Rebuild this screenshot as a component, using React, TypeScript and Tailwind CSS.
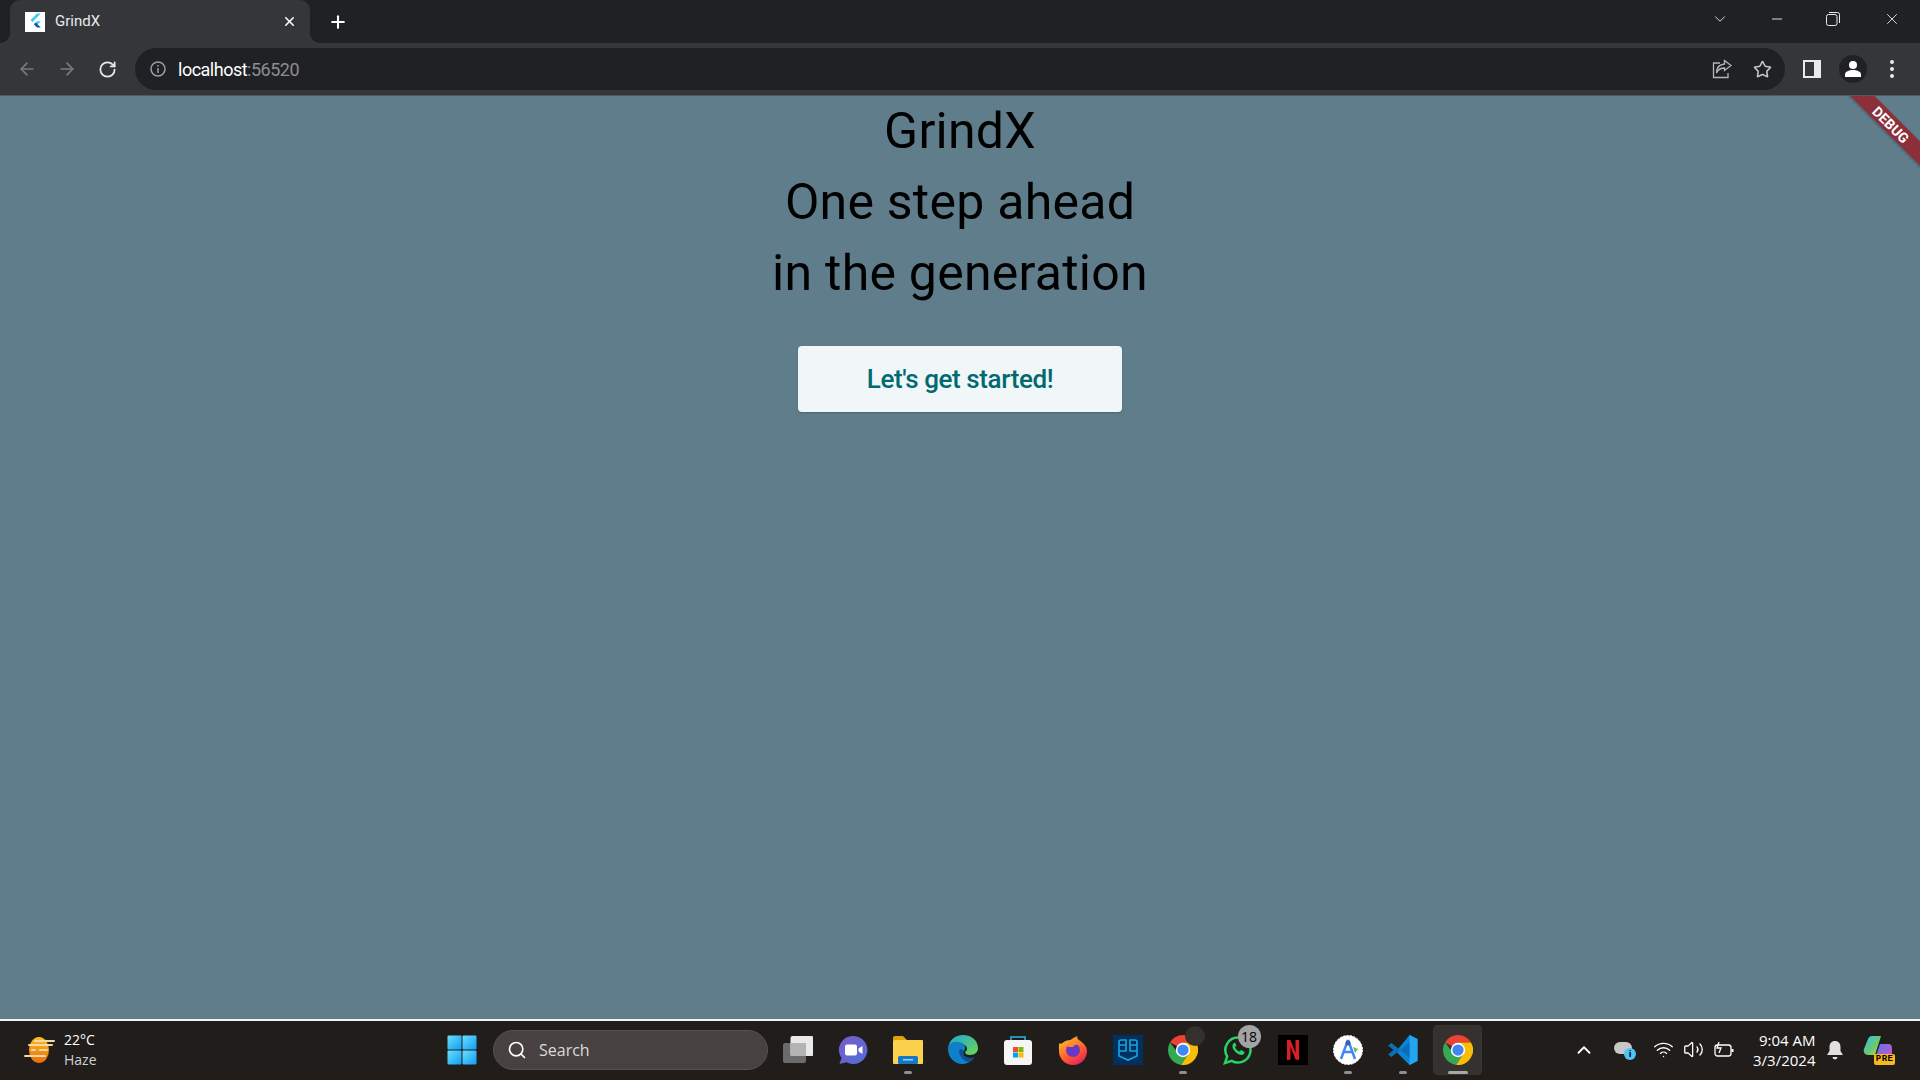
import { ArrowLeft, ArrowRight, ChevronDown, ChevronUp, Minus, Plus, RotateCw, Search, Star, Volume2, Wifi, X } from 'lucide-react';

const roboto = "font-['Roboto',sans-serif]";
const segoe = "font-['Open_Sans','Noto_Sans',sans-serif]";

function FlutterIcon() {
  return (
    <div className="flex h-5 w-5 shrink-0 items-center justify-center bg-white">
      <svg className="h-5 w-5" viewBox="0 0 20 20">
        <path d="M12 1.500h3.800L7.500 10 5.600 8z" fill="#44c7f5" />
        <path d="M12 9.200h3.800l-5 5-1.900-1.900z" fill="#44c7f5" />
        <path d="M8.900 12.300l1.900-1.900 5 5.100H12z" fill="#0b5fb0" />
      </svg>
    </div>
  );
}

function ChromeLogo({ size = 30 }: { size?: number }) {
  return (
    <svg width={size} height={size} viewBox="0 0 48 48">
      <path d="M3.200 12A24 24 0 0 1 24 0a24 24 0 0 1 20.800 12H24l-9 6z" fill="#ea4335" />
      <path d="M3.200 12A24 24 0 0 0 21 47.800L31 33l-13-2z" fill="#34a853" />
      <path d="M44.800 12H24l8 19-11 16.800A24 24 0 0 0 44.800 12z" fill="#fbbc04" />
      <circle cx="24" cy="24" r="11.500" fill="#fff" />
      <circle cx="24" cy="24" r="9" fill="#4285f4" />
    </svg>
  );
}

function WinLogo() {
  return (
    <svg width="30" height="30" viewBox="0 0 30 30">
      <defs>
        <linearGradient id="win" x1="0" y1="0" x2="1" y2="1">
          <stop offset="0" stopColor="#6ce0fb" />
          <stop offset="1" stopColor="#0f9bf5" />
        </linearGradient>
      </defs>
      <rect x="0.500" y="0.500" width="14" height="14" rx="1" fill="url(#win)" />
      <rect x="15.500" y="0.500" width="14" height="14" rx="1" fill="url(#win)" />
      <rect x="0.500" y="15.500" width="14" height="14" rx="1" fill="url(#win)" />
      <rect x="15.500" y="15.500" width="14" height="14" rx="1" fill="url(#win)" />
    </svg>
  );
}

function TaskView() {
  return (
    <svg width="30" height="30" viewBox="0 0 30 30">
      <rect x="0" y="8" width="23" height="20" rx="2" fill="#6b6b6b" />
      <rect x="7.500" y="1" width="23" height="20" rx="2" fill="#e9e9e9" />
      <rect x="7.500" y="8" width="15.500" height="13" fill="#b4b4b4" />
    </svg>
  );
}

function MeetIcon() {
  return (
    <svg width="30" height="30" viewBox="0 0 30 30">
      <defs>
        <linearGradient id="meet" x1="0" y1="0" x2="1" y2="1">
          <stop offset="0" stopColor="#7b5bc9" />
          <stop offset="1" stopColor="#4f6fd8" />
        </linearGradient>
      </defs>
      <path d="M15.500 1a14 14 0 1 1-7 26.200L1.500 29l2-6A14 14 0 0 1 15.500 1z" fill="url(#meet)" />
      <rect x="7" y="9.500" width="12" height="11" rx="2" fill="#fff" />
      <path d="M20.500 13.500l4-2.500v8l-4-2.500z" fill="#fff" />
    </svg>
  );
}

function FolderIcon() {
  return (
    <svg width="32" height="30" viewBox="0 0 32 30">
      <path d="M1 3a2 2 0 0 1 2-2h8l4 4h-14z" fill="#d9a406" />
      <rect x="1" y="5" width="30" height="24" rx="1" fill="#fbd24e" />
      <rect x="6" y="21" width="20" height="8" rx="1.500" fill="#1478c7" />
      <rect x="11" y="24" width="10" height="1.500" fill="#9bd0f5" />
    </svg>
  );
}

function EdgeIcon() {
  return (
    <svg width="32" height="32" viewBox="0 0 32 32">
      <defs>
        <linearGradient id="edgeTop" x1="0" y1="0" x2="1" y2="1">
          <stop offset="0" stopColor="#1ba6d8" />
          <stop offset="1" stopColor="#6fd84e" />
        </linearGradient>
      </defs>
      <path d="M1 15C2 6 8 1 16 1c9 0 15 6 15 13 0 4-3 7-8 7-3 0-5-1-5-3 4-2 2-8-4-8-7 0-13 1-13 5z" fill="url(#edgeTop)" />
      <path d="M1 15c0-6 6-8 10-7 6 0 9 5 6 9-2 3 0 7 6 7 2 0 3 0 4-1-3 5-7 7-12 7C7 30 1 23 1 15z" fill="#0f7fc7" />
      <path d="M12 16c0 6 4 10 9 12 3 0 5-1 6-5-1 1-2 1-4 1-6 0-8-4-6-7-2-2-4-2-5-1z" fill="#0d4f94" />
    </svg>
  );
}

function StoreIcon() {
  return (
    <svg width="30" height="30" viewBox="0 0 30 30">
      <path d="M8 5V2h14v3" fill="none" stroke="#29b6e8" strokeWidth="1.500" />
      <rect x="1" y="5" width="28" height="25" rx="3" fill="#f5f5f5" />
      <rect x="10" y="12" width="5" height="5" fill="#f25022" />
      <rect x="15.500" y="12" width="5" height="5" fill="#7fba00" />
      <rect x="10" y="17.500" width="5" height="5" fill="#00a4ef" />
      <rect x="15.500" y="17.500" width="5" height="5" fill="#ffb900" />
    </svg>
  );
}

function FirefoxIcon() {
  return (
    <svg width="30" height="30" viewBox="0 0 30 30">
      <defs>
        <linearGradient id="fox" x1="0.200" y1="0" x2="0.800" y2="1">
          <stop offset="0" stopColor="#ffc02c" />
          <stop offset="0.600" stopColor="#ff5a2a" />
          <stop offset="1" stopColor="#e3196f" />
        </linearGradient>
      </defs>
      <path d="M1.500 8c1 1 2 1 3 0 2-2 5-3 8-3 2-2 5-3 7-4-1 2 0 3 3 5 4 3 6.500 6 6.500 10a14 14 0 0 1-28 0c0-3-.5-6 .5-8z" fill="url(#fox)" />
      <circle cx="15" cy="15" r="7" fill="#6a38c9" />
      <path d="M8 11c3-4 10-5 14-1-4-1-6 0-7 2-3 0-5 0-7-1z" fill="#ff8a1f" />
    </svg>
  );
}

function ShieldIcon() {
  return (
    <div className="flex h-[30px] w-[30px] items-center justify-center bg-[#00305f]">
      <svg width="22" height="24" viewBox="0 0 22 24" fill="none" stroke="#17a5d8" strokeWidth="1.600">
        <path d="M2 4a2 2 0 0 1 2-2h5v11H2zM13 2h5a2 2 0 0 1 2 2v9h-7zM2 13v5l9 4 9-4v-5M2 7h7M13 7h7" />
      </svg>
    </div>
  );
}

function WhatsappIcon() {
  return (
    <svg width="30" height="30" viewBox="0 0 30 30" fill="none">
      <path d="M15 2.500a12.500 12.500 0 1 1-6.300 23.300L2 28l2.200-6.500A12.500 12.500 0 0 1 15 2.500z" stroke="#25d366" strokeWidth="2.500" />
      <path d="M10.500 8.500c-2 2-1 5.500 2 8.500s6.500 4 8.500 2l.5-2-3.500-2-1.500 1.500c-2-.5-3.500-2-4.500-4.500l1.500-1.500-1.500-3z" fill="#25d366" />
    </svg>
  );
}

function NetflixIcon() {
  return (
    <div className="flex h-[30px] w-[30px] items-center justify-center bg-black">
      <svg width="12" height="20" viewBox="0 0 12 20">
        <path d="M0 0h3.500l5 13V0H12v20l-3.500-.5-5-13V19.500L0 20z" fill="#d81f26" />
      </svg>
    </div>
  );
}

function StudioIcon() {
  return (
    <svg width="30" height="30" viewBox="0 0 30 30">
      <circle cx="15" cy="15" r="14.500" fill="#fff" stroke="#fff" strokeDasharray="2 1.500" />
      <path d="M15 5 8 24M15 5l7 19M10.500 17h9" fill="none" stroke="#4285f4" strokeWidth="2.500" />
      <circle cx="15" cy="8" r="2.500" fill="#3a5fa8" />
      <path d="M20 12l5 2-3 4z" fill="#5bb974" />
    </svg>
  );
}

function VsCodeIcon() {
  return (
    <svg width="30" height="30" viewBox="0 0 30 30">
      <path d="M21.500 0 29.500 4v22l-8 4L8 16.500 21.500 0z" fill="#0a84d6" />
      <path d="M21.500 0 29.500 4v22l-8 4z" fill="#25a5ee" />
      <path d="M21.500 7.500v15L3.500 8 0 10.500 5.500 15 0 19.500 3.500 22z" fill="#0a6fb8" />
    </svg>
  );
}

function WeatherIcon() {
  return (
    <svg width="32" height="28" viewBox="0 0 32 28">
      <defs>
        <linearGradient id="sun" x1="0" y1="0" x2="0" y2="1">
          <stop offset="0" stopColor="#fbbf24" />
          <stop offset="1" stopColor="#ea6a0c" />
        </linearGradient>
      </defs>
      <ellipse cx="15" cy="14" rx="10" ry="13" fill="url(#sun)" />
      <g stroke="#f1d9a6" strokeWidth="2" strokeLinecap="round">
        <path d="M11 5h19M5 9h23M16 14h7M1 20h20M8 14h3" />
      </g>
    </svg>
  );
}

function CopilotIcon() {
  return (
    <div className="relative h-[30px] w-[32px]">
      <svg width="30" height="26" viewBox="0 0 30 26">
        <defs>
          <linearGradient id="copA" x1="0" y1="0" x2="1" y2="1">
            <stop offset="0" stopColor="#35c0f0" />
            <stop offset="0.600" stopColor="#6bc96a" />
            <stop offset="1" stopColor="#f6d33c" />
          </linearGradient>
          <linearGradient id="copB" x1="0" y1="0" x2="1" y2="1">
            <stop offset="0" stopColor="#4a7bf0" />
            <stop offset="1" stopColor="#e04fc0" />
          </linearGradient>
        </defs>
        <path d="M9 1h9l-6 19H5c-3 0-5-3-4-6L5 4c1-2 2-3 4-3z" fill="url(#copA)" />
        <path d="M17 9h9c2 0 3 2 3 4v6c0 3-2 5-5 5H12z" fill="url(#copB)" />
      </svg>
      <span className="absolute right-0 bottom-0 rounded-[2px] bg-[#f6b81e] px-[2px] font-['Liberation_Mono',monospace] text-[9px] leading-[11px] font-bold tracking-[0.5px] text-black">
        PRE
      </span>
    </div>
  );
}

function TaskIcon({ children, pip, active }: { children: React.ReactNode; pip?: boolean; active?: boolean }) {
  return (
    <div className="relative flex h-[50px] w-[55px] items-center justify-center">
      {active && <div className="absolute inset-x-[3px] inset-y-0 rounded-[4px] border border-[#38342f] bg-[#35312e]" />}
      <div className="relative flex h-[32px] items-center justify-center">{children}</div>
      {pip && <div className={`absolute bottom-[1px] left-1/2 h-[3px] -translate-x-1/2 rounded-full ${active ? 'w-[20px] bg-[#a8a8a8]' : 'w-[8px] bg-[#8f8f8f]'}`} />}
    </div>
  );
}

function TitleBar() {
  return (
    <div className={`flex h-[43px] items-end bg-[#202124] pl-[10px] ${roboto}`}>
      <div className="relative flex h-[43px] w-[300px] items-center rounded-t-[10px] bg-[#35363a] pr-[13px] pl-[15px]">
        <div className="absolute bottom-0 left-[-10px] h-[10px] w-[10px] bg-[radial-gradient(circle_at_0_0,transparent_10px,#35363a_10px)]" />
        <div className="absolute right-[-10px] bottom-0 h-[10px] w-[10px] bg-[radial-gradient(circle_at_100%_0,transparent_10px,#35363a_10px)]" />
        <FlutterIcon />
        <span className="ml-[10px] flex-1 text-[15px] text-[#e8eaed]">GrindX</span>
        <X className="h-[15px] w-[15px] text-white" strokeWidth={2.5} />
      </div>
      <div className="flex h-[43px] w-[56px] items-center justify-center">
        <Plus className="h-[20px] w-[20px] text-white" strokeWidth={2.5} />
      </div>
      <div className="flex-1" />
      <div className="flex h-[38px] items-center self-start text-[#e8eaed]">
        <ChevronDown className="mr-[40px] h-[18px] w-[18px]" strokeWidth={1.2} />
        <Minus className="mr-[41px] h-[16px] w-[16px]" strokeWidth={1.4} />
        <svg className="mr-[43px]" width="14" height="14" viewBox="0 0 14 14" fill="none" stroke="currentColor">
          <rect x="0.500" y="2.500" width="10.500" height="11" rx="2" />
          <path d="M3 0.500h8.500a2 2 0 0 1 2 2V11" />
        </svg>
        <X className="mr-[19px] h-[18px] w-[18px]" strokeWidth={1.2} />
      </div>
    </div>
  );
}

function Toolbar() {
  return (
    <div className={`flex h-[53px] items-center border-b border-[#55565a] bg-[#35363a] ${roboto}`}>
      <div className="flex w-[135px] shrink-0 items-center pl-[17px]">
        <ArrowLeft className="h-[20px] w-[20px] text-[#7a7b7e]" strokeWidth={2} />
        <ArrowRight className="ml-[20px] h-[20px] w-[20px] text-[#7a7b7e]" strokeWidth={2} />
        <RotateCw className="ml-[21px] h-[19px] w-[19px] text-[#e8eaed]" strokeWidth={2.2} />
      </div>
      <div className="flex h-[42px] w-[1650px] shrink-0 items-center rounded-full bg-[#202124] pr-[12px] pl-[14px]">
        <svg width="18" height="18" viewBox="0 0 18 18" fill="none" stroke="#9aa0a6" strokeWidth="1.500">
          <circle cx="9" cy="9" r="7" />
          <path d="M9 8v5M9 5v1.500" />
        </svg>
        <span className="ml-[11px] flex-1 text-[18px] tracking-[-0.5px] text-white">
          localhost<span className="text-[#8b8e91]">:56520</span>
        </span>
        <svg className="mr-[21px]" width="20" height="20" viewBox="0 0 20 20" fill="none" stroke="#b4b6b8" strokeWidth="1.300">
          <path d="M8 4H1.500v14.500H16V14" />
          <path d="M12.500 1.500 19 6.500l-6.500 5V9C8.500 9 6 10.500 4.500 14c0-5 3-8.500 8-9z" />
        </svg>
        <Star className="mr-[1px] h-[19px] w-[19px] text-[#c4c6c8]" strokeWidth={2} />
      </div>
      <div className="ml-[18px] flex h-[18px] w-[18px] shrink-0 items-stretch border-[2px] border-[#e8eaed]">
        <div className="w-[9px] bg-[#35363a]" />
        <div className="flex-1 bg-[#e8eaed]" />
      </div>
      <div className="ml-[18px] flex h-[28px] w-[28px] shrink-0 items-center justify-center rounded-full bg-[#202124]">
        <svg width="18" height="18" viewBox="0 0 18 18" fill="#fff">
          <circle cx="9" cy="5" r="4" />
          <path d="M1 17v-2.500C1 11.500 5 10 9 10s8 1.500 8 4.500V17z" />
        </svg>
      </div>
      <div className="ml-[23px] flex shrink-0 flex-col gap-[3px]">
        <div className="h-[4px] w-[4px] rounded-full bg-[#e8eaed]" />
        <div className="h-[4px] w-[4px] rounded-full bg-[#e8eaed]" />
        <div className="h-[4px] w-[4px] rounded-full bg-[#e8eaed]" />
      </div>
    </div>
  );
}

function DebugBanner() {
  return (
    <div className="pointer-events-none absolute top-0 right-0 h-[74px] w-[74px] overflow-hidden">
      <div className="absolute top-[20px] right-[-36px] flex h-[17px] w-[130px] rotate-45 items-center justify-center bg-[#8b2f38] shadow-[0_1px_3px_rgba(0,0,0,0.3)]">
        <span className={`text-[14px] leading-none font-bold text-white ${roboto}`}>DEBUG</span>
      </div>
    </div>
  );
}

function Taskbar() {
  return (
    <div className={`flex h-[61px] items-center border-t-[2px] border-[#f2f2f2] bg-[#211d1b] pb-[2px] ${segoe}`}>
      <div className="flex w-[434px] shrink-0 items-center pl-[24px]">
        <WeatherIcon />
        <div className="ml-[8px] flex flex-col text-[14px] leading-[20px]">
          <span className="text-white">22°C</span>
          <span className="text-[#cfcfcf]">Haze</span>
        </div>
      </div>
      <TaskIcon>
        <WinLogo />
      </TaskIcon>
      <div className="mr-[2px] ml-[4px] flex h-[40px] w-[275px] shrink-0 items-center rounded-full border border-[#56514f] bg-[#474241] pl-[13px]">
        <Search className="h-[20px] w-[20px] text-white" strokeWidth={2} />
        <span className="ml-[12px] text-[16px] text-[#dadada]">Search</span>
      </div>
      <TaskIcon>
        <TaskView />
      </TaskIcon>
      <TaskIcon>
        <MeetIcon />
      </TaskIcon>
      <TaskIcon pip>
        <FolderIcon />
      </TaskIcon>
      <TaskIcon>
        <EdgeIcon />
      </TaskIcon>
      <TaskIcon>
        <StoreIcon />
      </TaskIcon>
      <TaskIcon>
        <FirefoxIcon />
      </TaskIcon>
      <TaskIcon>
        <ShieldIcon />
      </TaskIcon>
      <TaskIcon pip>
        <ChromeLogo />
        <div className="absolute top-[-8px] right-[-7px] h-[20px] w-[20px] rounded-full bg-[#35302c]" />
      </TaskIcon>
      <TaskIcon>
        <WhatsappIcon />
        <div className="absolute top-[-9px] right-[-8px] flex h-[23px] w-[23px] items-center justify-center rounded-full bg-[#a3a3a3] text-[14px] text-black">
          18
        </div>
      </TaskIcon>
      <TaskIcon>
        <NetflixIcon />
      </TaskIcon>
      <TaskIcon pip>
        <StudioIcon />
      </TaskIcon>
      <TaskIcon pip>
        <VsCodeIcon />
      </TaskIcon>
      <TaskIcon pip active>
        <ChromeLogo />
      </TaskIcon>
      <div className="flex flex-1 items-center text-white">
        <ChevronUp className="ml-[88px] h-[22px] w-[22px]" strokeWidth={2} />
        <div className="relative ml-[19px] h-[20px] w-[22px]">
          <div className="absolute top-[2px] left-0 h-[12px] w-[18px] rounded-full bg-[#c8c8c8]" />
          <div className="absolute right-0 bottom-0 flex h-[12px] w-[12px] items-center justify-center rounded-full bg-[#4fc3f7] text-[9px] leading-none font-bold text-black">
            i
          </div>
        </div>
        <Wifi className="ml-[17px] h-[21px] w-[21px]" strokeWidth={1.6} />
        <Volume2 className="ml-[9px] h-[21px] w-[21px]" strokeWidth={1.5} />
        <svg className="ml-[10px]" width="21" height="18" viewBox="0 0 21 18" fill="none" stroke="currentColor" strokeWidth="1.300">
          <rect x="1" y="4" width="16" height="11" rx="2.500" />
          <path d="M18.500 8v3" strokeWidth="2" />
          <path d="M5 1 3 7h4l-2 5" />
        </svg>
        <div className="ml-[18px] flex flex-col items-end text-[15px] leading-[20px]">
          <span>9:04 AM</span>
          <span>3/3/2024</span>
        </div>
        <svg className="ml-[11px]" width="18" height="20" viewBox="0 0 18 20" fill="#e0e0e0">
          <path d="M9 1c3.500 0 5.500 2.500 5.500 6v4l2.500 4H1l2.500-4V7C3.500 3.500 5.500 1 9 1z" />
          <path d="M6.500 17h5a2.500 2.500 0 0 1-5 0z" />
        </svg>
        <div className="ml-[19px]">
          <CopilotIcon />
        </div>
      </div>
    </div>
  );
}

export default function App() {
  return (
    <div className="flex h-[1080px] w-[1920px] flex-col overflow-hidden">
      <TitleBar />
      <Toolbar />
      <main className={`relative flex flex-1 flex-col items-center bg-[#607d8b] ${roboto}`}>
        <DebugBanner />
        <div className="flex flex-col items-center text-[50px] leading-[71px] tracking-[0.25px] text-black">
          <span>GrindX</span>
          <span>One step ahead</span>
          <span>in the generation</span>
        </div>
        <button className="mt-[37px] flex h-[66px] w-[324px] items-center justify-center rounded-[4px] bg-[#f1f7f8] text-[26px] font-medium tracking-[-0.4px] text-[#006a70] shadow-[0_1px_2px_rgba(0,0,0,0.2)]">
          Let's get started!
        </button>
      </main>
      <Taskbar />
    </div>
  );
}
